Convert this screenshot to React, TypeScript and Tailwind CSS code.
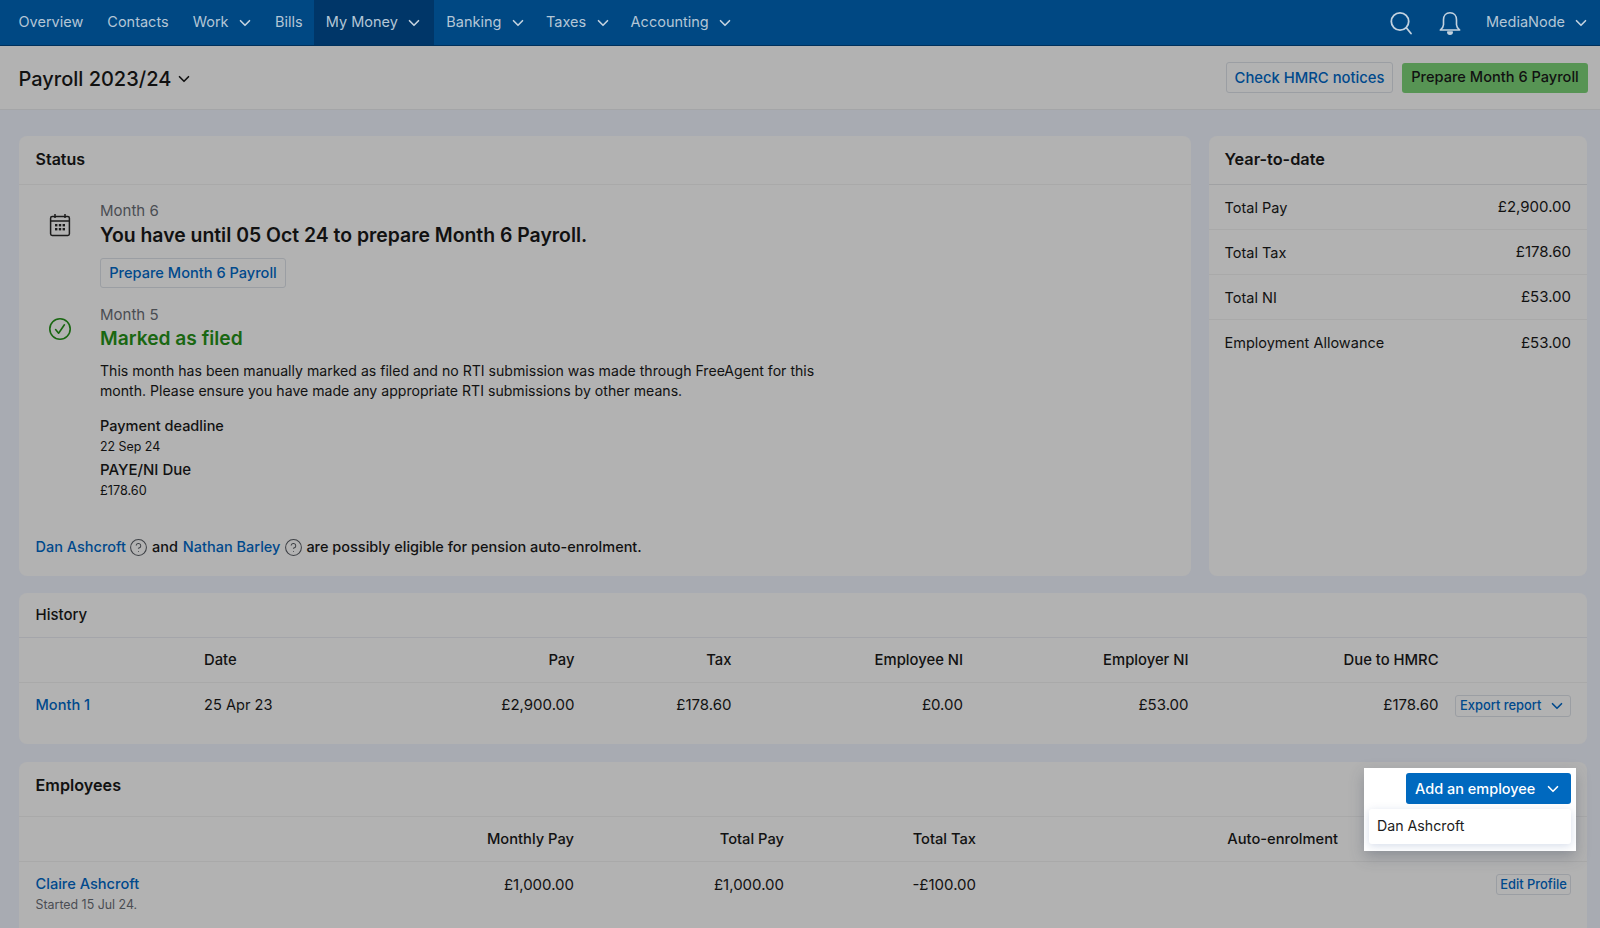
import React from "react";
import { ChevronDown, CircleHelp } from "lucide-react";

const Chev = ({ className = "" }: { className?: string }) => (
  <ChevronDown className={className} strokeWidth={2.2} />
);

const Nav = ({ label, chev, active, cls }: { label: string; chev?: boolean; active?: boolean; cls: string }) => (
  <div className={`flex items-center h-full text-[14.5px] text-[#b4c6d6] pb-[1px] ${active ? "bg-[#003668]" : ""} ${cls}`}>
    <span>{label}</span>
    {chev && <Chev className="w-[18px] h-[18px] ml-[7.5px] mt-[1px] text-[#c3d2df]" />}
  </div>
);

const Calendar = () => (
  <svg viewBox="0 0 24 24" className="w-[24px] h-[24px]" fill="none" stroke="#1c1c1c" strokeWidth="1.5">
    <rect x="2.6" y="3.6" width="18.8" height="18.8" rx="1.6" />
    <path d="M2.6 8h18.8M7 1v4M17 1v4" />
    <g fill="#1c1c1c" stroke="none">
      <rect x="7" y="11" width="2.4" height="2.4" /><rect x="10.8" y="11" width="2.4" height="2.4" /><rect x="14.6" y="11" width="2.4" height="2.4" />
      <rect x="7" y="15" width="2.4" height="2.4" /><rect x="10.8" y="15" width="2.4" height="2.4" /><rect x="14.6" y="15" width="2.4" height="2.4" />
    </g>
  </svg>
);

const CheckMark = () => (
  <svg viewBox="0 0 24 24" className="w-[24px] h-[24px]" fill="none" stroke="#1a6712" strokeWidth="1.6" strokeLinecap="round" strokeLinejoin="round">
    <circle cx="12" cy="12" r="10.2" />
    <path d="M7.6 12.6l3 3.6 5.8-8.4" />
  </svg>
);

const Row = ({ label, value, last }: { label: string; value: string; last?: boolean }) => (
  <div className={`flex justify-between items-center h-[45px] pl-[15.5px] pr-[16px] pt-[1px] text-[14.5px] ${last ? "" : "border-b border-[#a9a9a9]"}`}>
    <span>{label}</span>
    <span className="text-[15px]">{value}</span>
  </div>
);

const histCols = "grid grid-cols-[168.5px_120px_250.5px_157px_231.5px_225.5px_250px_1fr] items-center";
const empCols = "grid grid-cols-[237.5px_301px_210px_192px_362px_1fr] items-center";

export default function App() {
  return (
    <div className="h-[928px] w-[1600px] overflow-hidden bg-[#a8abb2] text-[#111111] font-['Inter','Liberation_Sans',sans-serif]">
      <nav className="h-[46px] bg-[#004883] border-b border-[#00315c] flex items-center">
        <Nav label="Overview" cls="pl-[18.5px] pr-[12px]" />
        <Nav label="Contacts" cls="px-[12px]" />
        <Nav label="Work" chev cls="pl-[12px] pr-[9px]" />
        <Nav label="Bills" cls="pl-[12px] pr-[11px]" />
        <Nav label="My Money" chev active cls="pl-[12px] pr-[11px]" />
        <Nav label="Banking" chev cls="pl-[12px] pr-[7px]" />
        <Nav label="Taxes" chev cls="pl-[12px] pr-[7px]" />
        <Nav label="Accounting" chev cls="pl-[12px] pr-[9px]" />
        <div className="ml-auto flex items-center h-full pr-[10px] text-[#c3d2df]">
          <svg viewBox="0 0 24 24" className="w-[24px] h-[24px] mr-[25px]" fill="none" stroke="#c3d2df" strokeWidth="1.8" strokeLinecap="round">
            <circle cx="11" cy="10.5" r="8.7" />
            <path d="M17.5 17l4.5 5.5" />
          </svg>
          <svg viewBox="0 0 24 24" className="w-[24px] h-[24px] mr-[24px]" fill="none" stroke="#c3d2df" strokeWidth="1.6" strokeLinejoin="round">
            <path d="M12 1.8c-4 0-6.5 3-6.5 7v5c0 2.2-1.5 3.8-3.2 5.2h19.4c-1.7-1.4-3.2-3-3.2-5.2v-5c0-4-2.5-7-6.5-7z" />
            <path d="M9.8 21a2.2 2.2 0 0 0 4.4 0z" fill="#c3d2df" />
          </svg>
          <span className="text-[14.5px] text-[#b4c6d6] pb-[1px]">MediaNode</span>
          <Chev className="w-[18px] h-[18px] ml-[7px]" />
        </div>
      </nav>

      <header className="h-[64px] bg-[#b2b2b2] border-b border-[#a4a5a7] flex items-center pl-[18.5px] pr-[12px]">
        <span className="text-[20px] font-medium pt-[2px]">Payroll 2023/24</span>
        <Chev className="w-[18px] h-[18px] ml-[4px] mt-[2px]" />
        <div className="ml-auto flex gap-[9px] items-center">
          <button className="h-[31px] w-[167px] pt-[1px] border border-[#9b9ea3] rounded-[3px] text-[14.8px] font-medium text-[#00498c] bg-[#b2b2b2]">Check HMRC notices</button>
          <button className="h-[30px] w-[186px] pt-[1px] rounded-[3px] text-[14.6px] font-medium text-[#111111] bg-[#579454]">Prepare Month 6 Payroll</button>
        </div>
      </header>

      <main className="pl-[19px] pr-[13px] pt-[26px]">
        <div className="flex gap-[18px]">
          <section className="w-[1172px] h-[440px] rounded-[8px] bg-[#b2b2b2]">
            <div className="h-[49px] flex items-center px-[16.5px] pb-[2px] border-b border-[#a9a9a9] text-[16px] font-semibold">Status</div>
            <div className="flex pl-[17px] pt-[16px]">
              <div className="w-[47px] mr-[17px] flex flex-col items-center">
                <div className="ml-[1px] mt-[12px]"><Calendar /></div>
              </div>
              <div>
                <div className="text-[15px] text-[#4a4d52] leading-[20px]">Month 6</div>
                <div className="text-[19.4px] font-semibold leading-[28px]">You have until 05 Oct 24 to prepare Month 6 Payroll.</div>
                <button className="mt-[9px] h-[30px] w-[186px] pt-[1px] border border-[#9b9ea3] rounded-[3px] text-[14.6px] font-medium text-[#00498c]">Prepare Month 6 Payroll</button>
              </div>
            </div>
            <div className="flex pl-[17px] pt-[17px]">
              <div className="w-[47px] mr-[17px] flex flex-col items-center">
                <div className="mt-[12px]"><CheckMark /></div>
              </div>
              <div>
                <div className="text-[15px] text-[#4a4d52] leading-[20px]">Month 5</div>
                <div className="text-[19.2px] font-semibold leading-[27px] text-[#1a6712]">Marked as filed</div>
                <p className="mt-[9px] text-[14.1px] leading-[20px] w-[740px]">This month has been manually marked as filed and no RTI submission was made through FreeAgent for this month. Please ensure you have made any appropriate RTI submissions by other means.</p>
                <div className="mt-[15px] text-[14.5px] font-medium leading-[20px]">Payment deadline</div>
                <div className="text-[12.4px] leading-[21px]">22 Sep 24</div>
                <div className="mt-[3px] text-[15px] font-medium leading-[20px]">PAYE/NI Due</div>
                <div className="text-[12.7px] leading-[21px]">£178.60</div>
              </div>
            </div>
            <div className="mt-[36px] pl-[16.5px] flex items-center text-[14.5px] font-medium leading-[20px]">
              <span className="text-[#00498c]">Dan Ashcroft</span>
              <CircleHelp className="w-[19px] h-[19px] mx-[3.5px] text-[#3e4146]" strokeWidth={1.3} />
              <span>and</span>
              <span className="text-[#00498c] ml-[5px]">Nathan Barley</span>
              <CircleHelp className="w-[19px] h-[19px] mx-[3.5px] text-[#3e4146]" strokeWidth={1.3} />
              <span>are possibly eligible for pension auto-enrolment.</span>
            </div>
          </section>
          <section className="w-[378px] h-[440px] rounded-[8px] bg-[#b2b2b2]">
            <div className="h-[49px] flex items-center pl-[15.5px] pr-[16px] pb-[1px] border-b border-[#a0a1a3] text-[16.3px] font-semibold">Year-to-date</div>
            <Row label="Total Pay" value="£2,900.00" />
            <Row label="Total Tax" value="£178.60" />
            <Row label="Total NI" value="£53.00" />
            <Row label="Employment Allowance" value="£53.00" last />
          </section>
        </div>

        <section className="mt-[17px] h-[151px] w-[1568px] rounded-[8px] bg-[#b2b2b2]">
          <div className="h-[45px] flex items-center px-[16.5px] pt-[1px] border-b border-[#a4a5aa] text-[15px] font-medium">History</div>
          <div className={`${histCols} h-[45px] pl-[16.5px] pr-[16px] border-b border-[#a9a9a9] text-[14.8px] font-medium`}>
            <span />
            <span>Date</span>
            <span className="text-right">Pay</span>
            <span className="text-right">Tax</span>
            <span className="text-right">Employee NI</span>
            <span className="text-right">Employer NI</span>
            <span className="text-right">Due to HMRC</span>
            <span />
          </div>
          <div className={`${histCols} h-[45px] pl-[16.5px] pr-[16px] text-[14.6px]`}>
            <span className="text-[#00498c] font-medium">Month 1</span>
            <span>25 Apr 23</span>
            <span className="text-right text-[15px]">£2,900.00</span>
            <span className="text-right text-[15px]">£178.60</span>
            <span className="text-right text-[15px]">£0.00</span>
            <span className="text-right text-[15px]">£53.00</span>
            <span className="text-right text-[15px]">£178.60</span>
            <div className="flex justify-end">
              <button className="h-[22px] w-[116px] pl-[4px] pr-[4px] border border-[#9b9ea3] rounded-[3px] flex items-center justify-between text-[12.9px] font-medium text-[#00498c]">
                Export report
                <Chev className="w-[18px] h-[18px]" />
              </button>
            </div>
          </div>
        </section>

        <section className="relative mt-[18px] h-[200px] w-[1568px] rounded-[8px] bg-[#b2b2b2]">
          <div className="h-[55px] flex items-center px-[16.5px] pb-[8px] border-b border-[#a9a9a9] text-[16.2px] font-semibold">Employees</div>
          <div className={`${empCols} h-[45px] pl-[16.5px] pr-[16px] border-b border-[#a9a9a9] text-[14.7px] font-medium`}>
            <span />
            <span className="text-right">Monthly Pay</span>
            <span className="text-right">Total Pay</span>
            <span className="text-right">Total Tax</span>
            <span className="text-right">Auto-enrolment</span>
            <span />
          </div>
          <div className={`${empCols} h-[65px] pl-[16.5px] pr-[16px] text-[15px] items-start pt-[12px]`}>
            <div>
              <div className="text-[#00498c] font-medium leading-[21px] text-[14.6px]">Claire Ashcroft</div>
              <div className="text-[12.4px] text-[#4a4d52] leading-[20px]">Started 15 Jul 24.</div>
            </div>
            <span className="text-right leading-[21px]">£1,000.00</span>
            <span className="text-right leading-[21px]">£1,000.00</span>
            <span className="text-right leading-[21px]">-£100.00</span>
            <span />
            <div className="flex justify-end">
              <button className="h-[21px] w-[75px] border border-[#9b9ea3] rounded-[3px] text-[12.9px] font-medium text-[#00498c]">Edit Profile</button>
            </div>
          </div>

          <div className="absolute top-[6px] right-[11px] w-[212px] h-[83px] bg-white shadow-[0_6px_14px_rgba(60,70,90,0.3)]">
            <button className="absolute top-[5px] right-[5px] w-[165px] h-[31px] bg-[#0069bf] rounded-[3px] text-white text-[14.5px] font-medium flex items-center justify-between pl-[9px] pr-[9px] pt-[1px]">
              Add an employee
              <Chev className="w-[18px] h-[18px]" />
            </button>
            <div className="absolute top-[41px] left-[5px] w-[202px] h-[35px] rounded-[3px] bg-white shadow-[0_2px_8px_rgba(90,120,170,0.25)] flex items-center pl-[8px] pb-[1px] text-[14.2px] text-[#1c1c1c]">Dan Ashcroft</div>
          </div>
        </section>
      </main>
    </div>
  );
}
